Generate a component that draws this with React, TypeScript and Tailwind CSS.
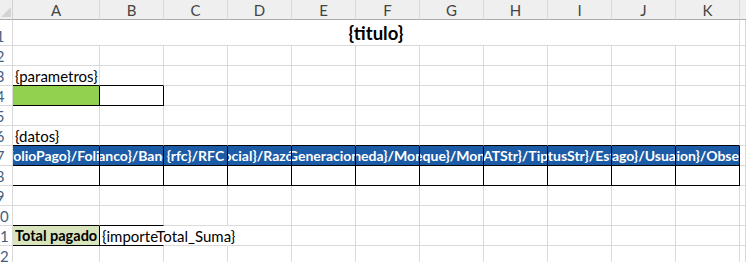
import React from "react"

const cols = ["A", "B", "C", "D", "E", "F", "G", "H", "I", "J", "K"]

const headers = [
    "{folioPago}/Folio",
    "{banco}/Banco",
    "{rfc}/RFC",
    "{razonSocial}/Razón Social",
    "{Generacion}",
    "{moneda}/Moneda",
    "{montoCheque}/Monto Cheque",
    "{tipoSATStr}/Tipo SAT",
    "{estatusStr}/Estatus",
    "{usuarioPago}/Usuario Pagos",
    "{observacion}/Observaciones",
]

type CellProps = {
    right?: boolean;
    bottom?: boolean;
    hideRight?: boolean;
    className?: string;
    children?: React.ReactNode;
}

const Cell: React.FC<CellProps> = ({right, bottom, hideRight, className, children}) => {
    const r = hideRight ? "border-r-transparent" : right ? "border-r-black" : "border-r-[#dadada]"
    const b = bottom ? "border-b-black" : "border-b-[#dadada]"
    return (
        <div className={`border-r border-b ${r} ${b} flex items-end min-w-0 ${className ?? ""}`}>
            {children}
        </div>
    )
}

const RowNum: React.FC<{n: number}> = ({n}) => (
    <div className="border-r border-b border-r-[#dadada] border-b-[#dadada] overflow-hidden flex items-end bg-white">
        <div className="w-[26px] -ml-[13px] shrink-0 text-center text-[15px] leading-[18px] text-[#45607f]">{n}</div>
    </div>
)

export default function App() {
    const blank = (row: number, opts: (i: number) => Partial<CellProps> = () => ({})) => (
        <>
            {cols.map((c, i) => <Cell key={c + row} {...opts(i)} />)}
            <Cell key={"L" + row} />
        </>
    )

    return (
        <div className="w-[746px] h-[262px] overflow-hidden bg-white font-['Lato',sans-serif] text-[15px] text-black">
            <div className="grid grid-cols-[13px_87px_repeat(10,64px)_6px] grid-rows-[20px_26px_repeat(11,20px)]">
                {/* column header */}
                <div className="bg-[#efefef] border-r border-b border-r-[#d0d0d0] border-b-[#ababab] flex items-end justify-end">
                    <svg width="10" height="10" viewBox="0 0 10 10" className="mb-[2px] mr-[1px]">
                        <polygon points="10,0 10,10 0,10" fill="#d3d3d3" />
                    </svg>
                </div>
                {cols.map((c) => (
                    <div key={c} className="bg-[#efefef] border-r border-b border-r-[#d9d9d9] border-b-[#ababab] flex items-center justify-center text-[#444] leading-none pt-[1px]">
                        {c}
                    </div>
                ))}
                <div className="bg-[#efefef] border-b border-b-[#ababab]" />

                {/* 1: title */}
                <RowNum n={1} />
                <div className="col-span-11 border-r border-b border-r-[#dadada] border-b-[#dadada] flex items-end justify-center pb-[1px]">
                    <span className="font-bold text-[18.5px] leading-[22px]">{"{titulo}"}</span>
                </div>
                <Cell />

                {/* 2 */}
                <RowNum n={2} />
                {blank(2)}

                {/* 3 */}
                <RowNum n={3} />
                <Cell bottom className="overflow-visible whitespace-nowrap pl-[2px] leading-[18px]">
                    <span className="relative z-10">{"{parametros}"}</span>
                </Cell>
                <Cell bottom />
                {cols.slice(2).map((c) => <Cell key={c + 3} />)}
                <Cell />

                {/* 4 */}
                <RowNum n={4} />
                <Cell right bottom className="bg-[#92d050]" />
                <Cell right bottom />
                {cols.slice(2).map((c) => <Cell key={c + 4} />)}
                <Cell />

                {/* 5 */}
                <RowNum n={5} />
                {blank(5)}

                {/* 6 */}
                <RowNum n={6} />
                <Cell bottom className="whitespace-nowrap pl-[2px] leading-[18px]">
                    <span className="relative z-10">{"{datos}"}</span>
                </Cell>
                {cols.slice(1).map((c) => <Cell key={c + 6} bottom />)}
                <Cell />

                {/* 7: data headers */}
                <RowNum n={7} />
                {headers.map((h, i) => (
                    <Cell key={"h" + i} right bottom className="bg-[#1c5ba6] overflow-hidden justify-center whitespace-nowrap">
                        <span className="font-bold text-white text-[14px] leading-[18px]">{h}</span>
                    </Cell>
                ))}
                <Cell />

                {/* 8 */}
                <RowNum n={8} />
                {blank(8, () => ({right: true, bottom: true}))}

                {/* 9 */}
                <RowNum n={9} />
                {blank(9)}

                {/* 10 */}
                <RowNum n={10} />
                {blank(10, (i) => (i < 2 ? {bottom: true} : {}))}

                {/* 11 */}
                <RowNum n={11} />
                <Cell right bottom className="bg-[#d8e4bc] whitespace-nowrap pl-[2px] leading-[18px]">
                    <span className="font-bold text-[14.5px]">Total pagado</span>
                </Cell>
                <Cell bottom hideRight className="whitespace-nowrap pl-[2px] leading-[18px] overflow-visible">
                    <span className="relative z-10">{"{importeTotal_Suma}"}</span>
                </Cell>
                <Cell hideRight />
                {cols.slice(3).map((c) => <Cell key={c + 11} />)}
                <Cell />

                {/* 12 */}
                <RowNum n={12} />
                {blank(12)}
            </div>
        </div>
    )
}
